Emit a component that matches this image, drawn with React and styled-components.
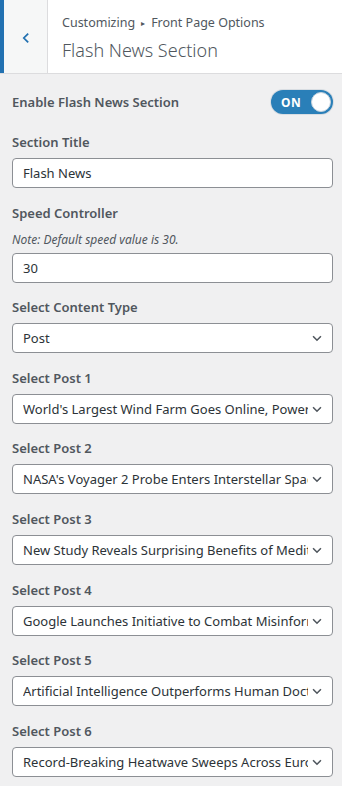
import React from 'react';
import styled, { createGlobalStyle } from 'styled-components';

const GlobalStyle = createGlobalStyle`
  * { box-sizing: border-box; }
  body {
    margin: 0;
    background: #f0f0f1;
    font-family: "Noto Sans", "Open Sans", sans-serif;
    color: #50575e;
  }
`;

const Panel = styled.div`
  width: 342px;
  min-height: 786px;
  background: #f0f0f1;
`;

const Header = styled.div`
  display: flex;
  height: 74px;
  background: #fff;
  border-bottom: 1px solid #dcdcde;
`;

const BackButton = styled.div`
  width: 48px;
  display: flex;
  align-items: center;
  justify-content: center;
  padding-top: 2px;
  background: #f6f7f7;
  border-left: 4px solid #2271b1;
  border-right: 1px solid #dcdcde;
`;

const Titles = styled.div`
  display: flex;
  flex-direction: column;
  justify-content: center;
  padding: 4px 0 0 14px;
`;

const Crumb = styled.div`
  font-size: 12.5px;
  line-height: 18px;
  color: #50575e;
  display: flex;
  align-items: center;
  gap: 6px;
`;

const Arrow = styled.span`
  font-size: 8px;
`;

const Title = styled.div`
  font-size: 18px;
  font-weight: 300;
  line-height: 28px;
  margin-top: 4px;
  color: #50575e;
`;

const Body = styled.div`
  padding: 16px 9px 10px 12px;
  display: flex;
  flex-direction: column;
`;

const ToggleRow = styled.div`
  display: flex;
  align-items: center;
  justify-content: space-between;
  margin-bottom: 18px;
`;

const Label = styled.div`
  font-size: 13px;
  font-weight: 600;
  line-height: 20px;
  color: #50575e;
  margin-bottom: ${p => (p.$flush ? '0' : p.$note ? '8px' : '6px')};
`;

const Note = styled.div`
  font-size: 12px;
  font-style: italic;
  line-height: 18px;
  margin-bottom: 4px;
`;

const Toggle = styled.div`
  width: 62px;
  height: 24px;
  border-radius: 12px;
  background: #2a7fb8;
  box-shadow: 0 0 0 1px #d8dde2;
  display: flex;
  align-items: center;
  justify-content: space-between;
  padding: 0 2px 0 10px;
  color: #fff;
  font-size: 12px;
  font-weight: 700;
  letter-spacing: 0.5px;
`;

const Knob = styled.span`
  width: 20px;
  height: 20px;
  border-radius: 50%;
  background: #fff;
  border: 1px solid #c6d3de;
`;

const Field = styled.div`
  display: flex;
  flex-direction: column;
  margin-bottom: 14.6px;
`;

const Input = styled.div`
  height: 30px;
  border: 1px solid #8c8f94;
  border-radius: 4px;
  background: #fff;
  display: flex;
  align-items: center;
  padding: 0 8px 0 10px;
  font-size: 13px;
  color: #2c3338;
  overflow: hidden;
`;

const Value = styled.span`
  flex: 1;
  white-space: nowrap;
  overflow: hidden;
`;

const Chevron = () => (
  <svg width="14" height="14" viewBox="0 0 16 16" style={{ flexShrink: 0, marginLeft: 2 }}>
    <path d="M3.5 6 L8 10.5 L12.5 6" fill="none" stroke="#50575e" strokeWidth="1.8" />
  </svg>
);

const Select = ({ children }) => (
  <Input>
    <Value>{children}</Value>
    <Chevron />
  </Input>
);

const posts = [
  "World's Largest Wind Farm Goes Online, Powering Millions",
  "NASA's Voyager 2 Probe Enters Interstellar Space",
  'New Study Reveals Surprising Benefits of Meditation',
  'Google Launches Initiative to Combat Misinformation',
  'Artificial Intelligence Outperforms Human Doctors',
  'Record-Breaking Heatwave Sweeps Across Europe',
];

export default function App() {
  return (
    <Panel>
      <GlobalStyle />
      <Header>
        <BackButton>
          <svg width="14" height="14" viewBox="0 0 16 16">
            <path d="M10.5 3 L5.5 8 L10.5 13" fill="none" stroke="#2271b1" strokeWidth="2" />
          </svg>
        </BackButton>
        <Titles>
          <Crumb>
            <span>Customizing</span>
            <Arrow>▸</Arrow>
            <span>Front Page Options</span>
          </Crumb>
          <Title>Flash News Section</Title>
        </Titles>
      </Header>
      <Body>
        <ToggleRow>
          <Label $flush>Enable Flash News Section</Label>
          <Toggle>
            ON
            <Knob />
          </Toggle>
        </ToggleRow>
        <Field>
          <Label>Section Title</Label>
          <Input>Flash News</Input>
        </Field>
        <Field>
          <Label $note>Speed Controller</Label>
          <Note>Note: Default speed value is 30.</Note>
          <Input>30</Input>
        </Field>
        <Field>
          <Label>Select Content Type</Label>
          <Select>Post</Select>
        </Field>
        {posts.map((p, i) => (
          <Field key={i}>
            <Label>Select Post {i + 1}</Label>
            <Select>{p}</Select>
          </Field>
        ))}
      </Body>
    </Panel>
  );
}
